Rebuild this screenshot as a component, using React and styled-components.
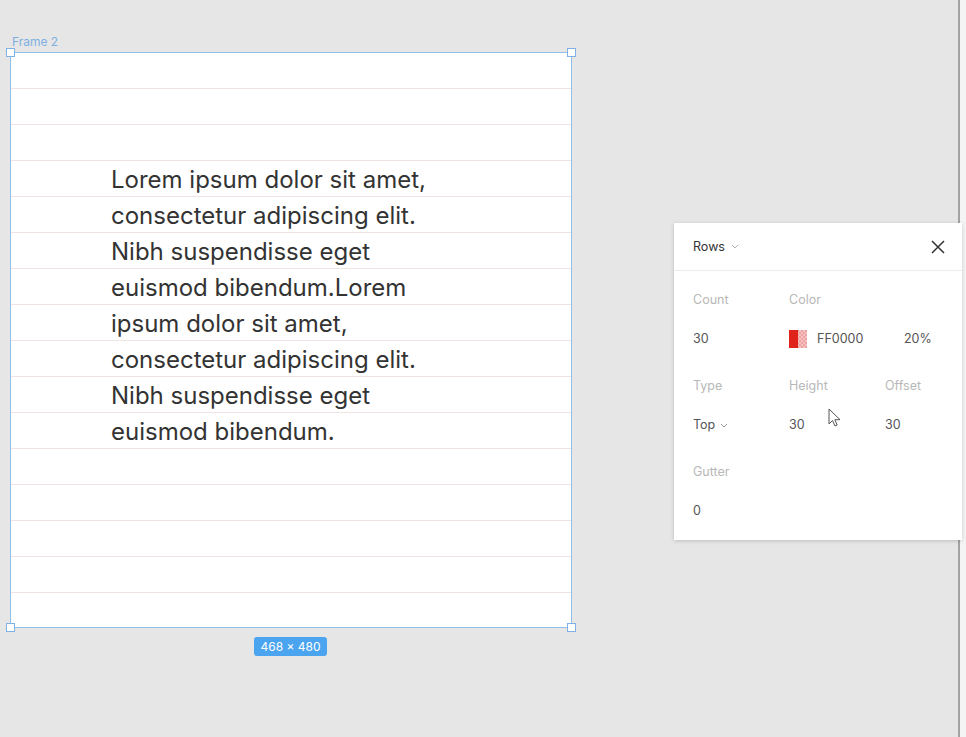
import styled, { createGlobalStyle } from 'styled-components';

const GlobalStyle = createGlobalStyle`
  html, body {
    margin: 0;
    padding: 0;
    background: #e6e6e6;
    font-family: Inter, "Noto Sans", sans-serif;
  }
`;

const Screen = styled.div`
  display: flex;
  width: 966px;
  height: 737px;
  overflow: hidden;
`;

const Canvas = styled.div`
  position: relative;
  flex: 1;
  background: #e6e6e6;
`;

const SideStrip = styled.div`
  width: 6px;
  border-left: 2px solid #a3a3a3;
  background: #f4f4f4;
`;

const FrameLabel = styled.div`
  position: absolute;
  left: 12px;
  top: 34px;
  font-size: 12px;
  color: #7eb0e2;
`;

const Frame = styled.div`
  position: absolute;
  left: 10px;
  top: 52px;
  width: 562px;
  height: 576px;
  box-sizing: border-box;
  border: 1.5px solid #93bfe9;
  background-color: #fff;
  background-image: repeating-linear-gradient(
    to bottom,
    transparent 0px,
    transparent 35px,
    #f2e3e3 35px,
    #f2e3e3 36px
  );
`;

const Handle = styled.span`
  position: absolute;
  width: 7px;
  height: 7px;
  background: #fff;
  border: 1.5px solid #7fb1e4;
  ${({ $v }) => ($v === 'top' ? 'top: -5px;' : 'bottom: -5px;')}
  ${({ $h }) => ($h === 'left' ? 'left: -5px;' : 'right: -5px;')}
`;

const Copy = styled.p`
  margin: 0;
  padding: 109px 0 0 100px;
  width: 330px;
  font-size: 24px;
  line-height: 36px;
  color: #333;
`;

const SizeBadge = styled.div`
  position: absolute;
  left: 254px;
  top: 637px;
  width: 73px;
  height: 19px;
  border-radius: 3px;
  background: #4ba4ef;
  color: #fff;
  font-size: 12px;
  display: flex;
  align-items: center;
  justify-content: center;
`;

const Panel = styled.div`
  position: absolute;
  left: 674px;
  top: 223px;
  width: 288px;
  height: 317px;
  background: #fff;
  box-shadow: 0 1px 4px rgba(0, 0, 0, 0.18);
  font-size: 12.5px;
`;

const PanelHeader = styled.div`
  height: 48px;
  box-sizing: border-box;
  border-bottom: 1px solid #ececec;
  display: flex;
  align-items: center;
  justify-content: space-between;
  padding: 0 17px 0 19px;
`;

const Title = styled.div`
  display: flex;
  align-items: center;
  gap: 6px;
  color: #333;
`;

const Section = styled.div`
  display: grid;
  grid-template-columns: 96px 96px 96px;
  padding-left: 19px;
  padding-top: ${({ $top }) => $top}px;
`;

const Label = styled.div`
  color: #b8b8b8;
  line-height: 20px;
  margin-bottom: 19px;
  grid-column: ${({ $col }) => $col || 'auto'};
`;

const Value = styled.div`
  color: #555;
  line-height: 20px;
  display: flex;
  align-items: center;
  gap: 5px;
  margin-bottom: 27px;
  grid-column: ${({ $span }) => ($span ? `span ${$span}` : 'auto')};
`;

const Swatch = styled.span`
  width: 18px;
  height: 18px;
  display: flex;
  margin-right: 5px;
`;

const Hex = styled.span`
  width: 82px;
`;

const Cursor = styled.svg`
  position: absolute;
  left: 828px;
  top: 408px;
`;

const Chevron = ({ color = '#b0b0b0' }) => (
  <svg width="8" height="5" viewBox="0 0 8 5">
    <path d="M1 1l3 3 3-3" fill="none" stroke={color} strokeWidth="1" />
  </svg>
);

const CloseIcon = () => (
  <svg width="14" height="14" viewBox="0 0 14 14">
    <path d="M1 1l12 12M13 1L1 13" stroke="#333" strokeWidth="1.5" />
  </svg>
);

const ColorSwatch = () => (
  <Swatch>
    <svg width="18" height="18" viewBox="0 0 18 18">
      <defs>
        <pattern id="chk" width="4" height="4" patternUnits="userSpaceOnUse">
          <rect width="4" height="4" fill="#fff" />
          <rect width="2" height="2" fill="#ddd" />
          <rect x="2" y="2" width="2" height="2" fill="#ddd" />
        </pattern>
      </defs>
      <rect x="0" y="0" width="9" height="18" fill="#e0231a" />
      <rect x="9" y="0" width="9" height="18" fill="url(#chk)" />
      <rect x="9" y="0" width="9" height="18" fill="rgba(255,0,0,0.25)" />
    </svg>
  </Swatch>
);

export default function App() {
  return (
    <Screen>
      <GlobalStyle />
      <Canvas>
        <FrameLabel>Frame 2</FrameLabel>
        <Frame>
          <Handle $v="top" $h="left" />
          <Handle $v="top" $h="right" />
          <Handle $v="bottom" $h="left" />
          <Handle $v="bottom" $h="right" />
          <Copy>
            Lorem ipsum dolor sit amet, consectetur adipiscing elit. Nibh suspendisse eget
            euismod bibendum.Lorem ipsum dolor sit amet, consectetur adipiscing elit. Nibh
            suspendisse eget euismod bibendum.
          </Copy>
        </Frame>
        <SizeBadge>468 × 480</SizeBadge>

        <Panel>
          <PanelHeader>
            <Title>
              Rows <Chevron />
            </Title>
            <CloseIcon />
          </PanelHeader>
          <Section $top={19}>
            <Label>Count</Label>
            <Label $col="span 2">Color</Label>
            <Value>30</Value>
            <Value $span={2}>
              <ColorSwatch />
              <Hex>FF0000</Hex>
              20%
            </Value>
          </Section>
          <Section $top={0}>
            <Label>Type</Label>
            <Label>Height</Label>
            <Label>Offset</Label>
            <Value>
              Top <Chevron color="#999" />
            </Value>
            <Value>30</Value>
            <Value>30</Value>
          </Section>
          <Section $top={0}>
            <Label>Gutter</Label>
            <div />
            <div />
            <Value>0</Value>
          </Section>
        </Panel>

        <Cursor width="14" height="20" viewBox="0 0 14 20">
          <path
            d="M1 1v15l3.5-3.5 2.5 5.5 2.2-1-2.4-5.3H12z"
            fill="#fff"
            stroke="#555"
            strokeWidth="1"
            strokeLinejoin="round"
          />
        </Cursor>
      </Canvas>
      <SideStrip />
    </Screen>
  );
}
